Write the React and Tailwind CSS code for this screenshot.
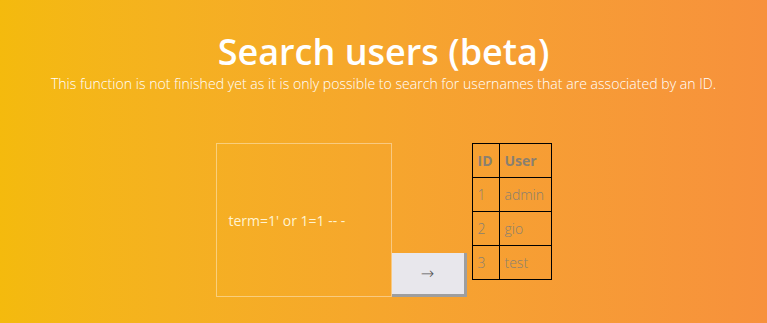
export default function App() {
  const rows = [
    { id: 1, user: 'admin' },
    { id: 2, user: 'gio' },
    { id: 3, user: 'test' },
  ];
  return (
    <div
      className="h-[323px] w-full overflow-hidden bg-gradient-to-r from-[#f4ba0d] to-[#f7913c] text-center text-white"
      style={{ fontFamily: '"Open Sans", sans-serif' }}
    >
      <h1 className="pt-[30px] text-[36px] font-semibold leading-[44px]">Search users (beta)</h1>
      <p className="text-[14.1px] font-light leading-[20px]">
        This function is not finished yet as it is only possible to search for usernames that are associated by an ID.
      </p>

      <div className="mt-[49px] flex justify-center">
        <div className="flex items-end">
          <div className="flex h-[154px] w-[176px] items-center border border-white/40 px-3 text-left text-[14px] text-[#fff3d2]">
            term=1' or 1=1 -- -
          </div>
          <button
            className="h-[44px] w-[75px] border-r-[3px] border-b-[3px] border-[#9e9e9e] bg-[#e8e7ec] text-[16px] font-light leading-none text-[#555]"
            style={{ fontFamily: '"DejaVu Sans", sans-serif' }}
          >
            →
          </button>
        </div>
        <table className="ml-[5px] self-start border-collapse text-left text-[14px] text-[#8a8070]">
          <thead>
            <tr className="h-[34px]">
              <th className="w-[27px] border border-black px-[5px] font-bold">ID</th>
              <th className="w-[52px] border border-black px-[5px] font-bold">User</th>
            </tr>
          </thead>
          <tbody>
            {rows.map((r) => (
              <tr key={r.id} className="h-[34px]">
                <td className="border border-black px-[5px] font-light">{r.id}</td>
                <td className="border border-black px-[5px] font-light">{r.user}</td>
              </tr>
            ))}
          </tbody>
        </table>
      </div>
    </div>
  );
}
